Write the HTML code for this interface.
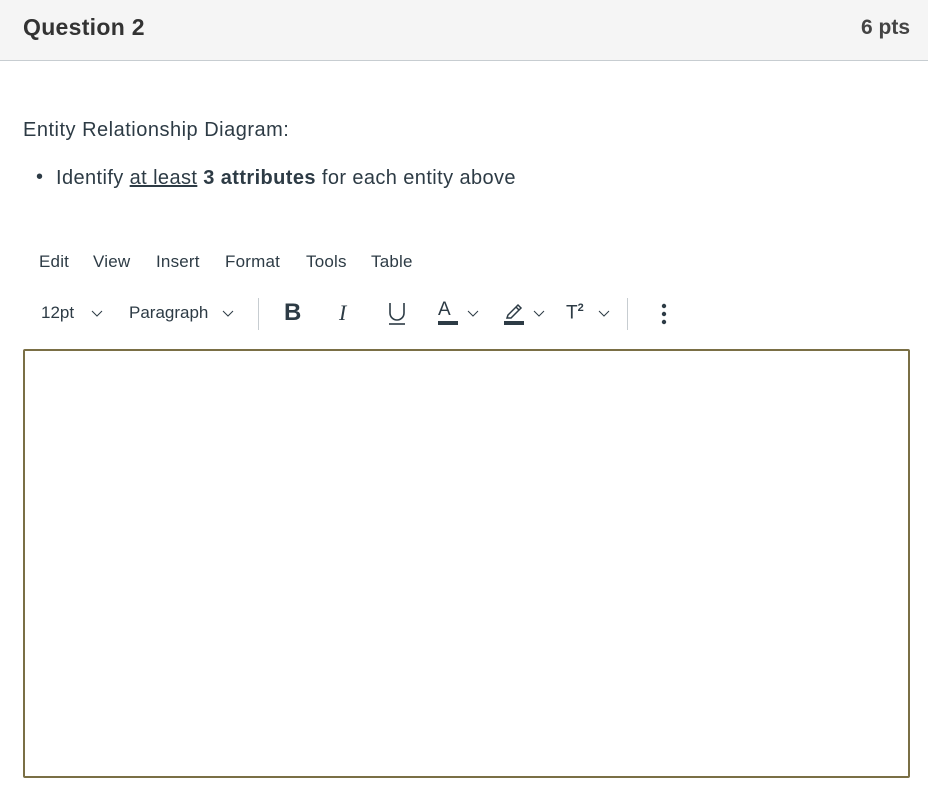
<!DOCTYPE html>
<html><head><meta charset="utf-8"><style>
body{margin:0;width:928px;height:798px;background:#fff;font-family:"Liberation Sans",sans-serif;color:#2d3b45;position:relative;overflow:hidden}
.a{position:absolute;white-space:nowrap}
.hdr{position:absolute;left:0;top:0;width:928px;height:60px;background:#f5f5f5;border-bottom:1px solid #c7cdd1}
.sep{position:absolute;width:1px;background:#c7cdd1}
.m{font-size:17px;top:252px;letter-spacing:0.2px}
</style></head><body>
<div class="hdr"></div>
<div class="a" style="left:23px;top:14px;font-size:23px;font-weight:bold;color:#333;letter-spacing:0.3px">Question 2</div>
<div class="a" style="right:18px;top:16px;font-size:21px;font-weight:bold;color:#444">6 pts</div>
<div class="a" style="left:23px;top:119px;font-size:20px;letter-spacing:0.5px">Entity Relationship Diagram:</div>
<div class="a" style="left:36px;top:166px;font-size:20px">•</div>
<div class="a" style="left:56px;top:167px;font-size:20px;letter-spacing:0.4px">Identify <span style="text-decoration:underline">at least</span> <b>3 attributes</b> for each entity above</div>
<div class="a m" style="left:39px">Edit</div>
<div class="a m" style="left:93px">View</div>
<div class="a m" style="left:156px">Insert</div>
<div class="a m" style="left:225px">Format</div>
<div class="a m" style="left:306px">Tools</div>
<div class="a m" style="left:371px">Table</div>
<div class="a" style="left:41px;top:303px;font-size:17px">12pt</div>
<svg class="a" style="left:91px;top:310px" width="12" height="8"><path d="M1 1 L6 6 L11 1" fill="none" stroke="#2d3b45" stroke-width="1"/></svg>
<div class="a" style="left:129px;top:303px;font-size:17px">Paragraph</div>
<svg class="a" style="left:222px;top:310px" width="12" height="8"><path d="M1 1 L6 6 L11 1" fill="none" stroke="#2d3b45" stroke-width="1"/></svg>
<div class="sep" style="left:258px;top:298px;height:32px"></div>
<div class="a" style="left:284px;top:299px;font-size:24px;font-weight:bold">B</div>
<div class="a" style="left:339px;top:300px;font-size:22px;font-style:italic;font-family:'Liberation Serif',serif">I</div>
<svg class="a" style="left:387px;top:302px" width="20" height="26"><path d="M3 1 V11 A7 7 0 0 0 17 11 V1" fill="none" stroke="#2d3b45" stroke-width="1.6"/><path d="M2 22 H18" stroke="#2d3b45" stroke-width="1.6"/></svg>
<div class="a" style="left:438px;top:299px;font-size:19px">A</div>
<div class="a" style="left:438px;top:321px;width:20px;height:4px;background:#2d3b45"></div>
<svg class="a" style="left:467px;top:310px" width="12" height="8"><path d="M1 1 L6 6 L11 1" fill="none" stroke="#2d3b45" stroke-width="1"/></svg>
<svg class="a" style="left:504px;top:302px" width="20" height="18" viewBox="0 0 20 18"><path d="M4 13 L12 5 L15 8 L7 16 L3 16 Z M12 5 L14 3 L17 6 L15 8" fill="none" stroke="#2d3b45" stroke-width="1.5"/></svg>
<div class="a" style="left:504px;top:321px;width:20px;height:4px;background:#2d3b45"></div>
<svg class="a" style="left:533px;top:310px" width="12" height="8"><path d="M1 1 L6 6 L11 1" fill="none" stroke="#2d3b45" stroke-width="1"/></svg>
<div class="a" style="left:566px;top:302px;font-size:19px">T<sup style="font-size:11px;font-weight:bold">2</sup></div>
<svg class="a" style="left:598px;top:310px" width="12" height="8"><path d="M1 1 L6 6 L11 1" fill="none" stroke="#2d3b45" stroke-width="1"/></svg>
<div class="sep" style="left:627px;top:298px;height:32px"></div>
<svg class="a" style="left:660px;top:303px" width="8" height="24"><circle cx="4" cy="3" r="2.2" fill="#2d3b45"/><circle cx="4" cy="11" r="2.2" fill="#2d3b45"/><circle cx="4" cy="19" r="2.2" fill="#2d3b45"/></svg>
<div class="a" style="left:23px;top:349px;width:883px;height:425px;border:2px solid #7a6f45;border-radius:2px"></div>
</body></html>
